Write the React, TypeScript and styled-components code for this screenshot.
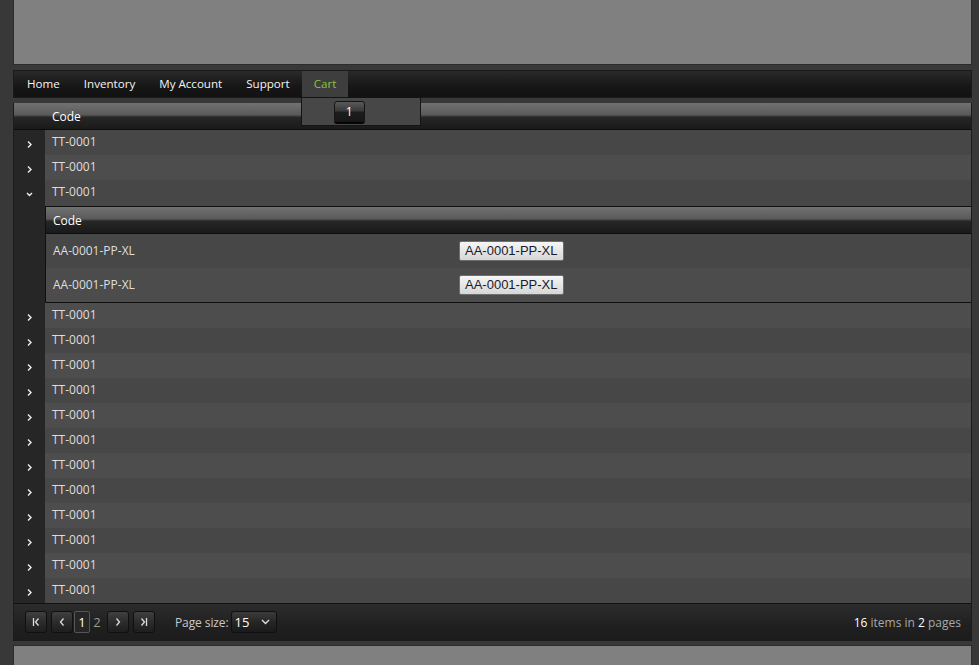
import React from "react";
import styled, { createGlobalStyle } from "styled-components";

const GlobalStyle = createGlobalStyle`
  html, body {
    margin: 0;
    padding: 0;
    background: #383838;
    font-family: "Open Sans", "DejaVu Sans", sans-serif;
  }
  * { box-sizing: border-box; }
`;

const Page = styled.div`
  width: 959px;
  margin-left: 13px;
  display: flex;
  flex-direction: column;
`;

const Banner = styled.div`
  height: 65px;
  background: #808080;
  border-left: 1px solid #2c2c2c;
  border-right: 1px solid #2c2c2c;
  border-bottom: 1px solid #2c2c2c;
`;

const Menu = styled.nav`
  position: relative;
  margin-top: 5px;
  height: 28px;
  display: flex;
  align-items: stretch;
  padding-left: 1px;
  border: 1px solid #1a1a1a;
  background: linear-gradient(#2a2a2a, #161616 60%, #121212);
`;

const MenuItem = styled.div<{ $active?: boolean }>`
  position: relative;
  display: flex;
  align-items: center;
  padding: 0 12px 1px;
  font-size: 11.6px;
  color: ${(p) => (p.$active ? "#8cc43c" : "#f4f4f4")};
  background: ${(p) => (p.$active ? "#3e3e3e" : "transparent")};
`;

const CartPopup = styled.div`
  position: absolute;
  left: -1px;
  top: 26px;
  width: 120px;
  height: 29px;
  background: #474747;
  border: 1px solid #141414;
  z-index: 2;
  display: flex;
  padding: 3px 0 0 32px;
`;

const CartButton = styled.div`
  width: 31px;
  height: 21px;
  border: 1px solid #141414;
  border-radius: 3px;
  background: linear-gradient(#5a5a5a, #3a3a3a 45%, #1c1c1c 55%, #181818);
  box-shadow: 0 2px 0 #050505;
  color: #fff;
  font-size: 12px;
  display: flex;
  align-items: center;
  justify-content: center;
`;

const Grid = styled.div`
  margin-top: 5px;
  border: 1px solid #1c1c1c;
  border-top: none;
  background: #474747;
`;

const HeaderRow = styled.div<{ $indent: number }>`
  height: 27px;
  display: flex;
  align-items: center;
  padding-left: ${(p) => p.$indent}px;
  color: #fff;
  font-size: 12px;
  background: linear-gradient(#727272, #5a5a5a 45%, #262626 55%, #1a1a1a);
  border-bottom: 1px solid #0c0c0c;
`;

const Row = styled.div<{ $alt: boolean }>`
  display: flex;
  height: 25px;
  background: ${(p) => (p.$alt ? "#4d4d4d" : "#474747")};
`;

const HierCell = styled.div`
  width: 31px;
  flex-shrink: 0;
  background: #262626;
  display: flex;
  align-items: center;
  justify-content: center;
  padding-top: 3px;
`;

const CodeCell = styled.div`
  flex: 1;
  display: flex;
  align-items: center;
  padding-left: 7px;
  padding-bottom: 2px;
  font-size: 12px;
  color: #dedede;
`;

const DetailRow = styled.div`
  display: flex;
  background: #474747;
`;

const DetailGrid = styled.div`
  flex: 1;
  margin-top: 1px;
  border: 1px solid #101010;
  border-right: none;
`;

const DetailItem = styled.div<{ $alt: boolean }>`
  height: 34px;
  display: grid;
  grid-template-columns: 406px 1fr;
  align-items: center;
  padding: 0 0 1px 7px;
  font-size: 12px;
  color: #dedede;
  background: ${(p) => (p.$alt ? "#4c4c4c" : "#474747")};
`;

const SkuButton = styled.button`
  justify-self: start;
  height: 20px;
  padding: 0 5px;
  font-family: "Liberation Sans", Arial, sans-serif;
  font-size: 13px;
  color: #1a1a2a;
  border: 1px solid #6e6e6e;
  border-radius: 2px;
  background: linear-gradient(#f6f6f6, #e6e6e6 50%, #d6d6d6);
`;

const Pager = styled.div`
  height: 37px;
  display: flex;
  align-items: center;
  padding: 0 10px 0 11px;
  border-top: 1px solid #111;
  background: linear-gradient(#2c2c2c, #202020 60%, #1c1c1c);
  color: #c8c8c8;
  font-size: 12px;
`;

const PagerButton = styled.div`
  width: 22px;
  height: 22px;
  margin-right: 4px;
  border: 1px solid #101010;
  border-radius: 3px;
  background: linear-gradient(#404040, #2c2c2c 50%, #1e1e1e);
  display: flex;
  align-items: center;
  justify-content: center;
`;

const PageNum = styled.div<{ $current?: boolean }>`
  min-width: 16px;
  height: 22px;
  margin: 0 2px 0 -3px;
  display: flex;
  align-items: center;
  justify-content: center;
  font-size: 13px;
  color: ${(p) => (p.$current ? "#fff" : "#9a9a9a")};
  border: 1px solid ${(p) => (p.$current ? "#555" : "transparent")};
  border-radius: 2px;
  background: ${(p) => (p.$current ? "#262626" : "transparent")};
`;

const SizeLabel = styled.span`
  margin-left: 16px;
  margin-right: 2px;
  letter-spacing: -0.1px;
`;

const SizeSelect = styled.div`
  width: 46px;
  height: 22px;
  border: 1px solid #101010;
  border-radius: 3px;
  background: linear-gradient(#3c3c3c, #262626 50%, #1a1a1a);
  display: flex;
  align-items: center;
  justify-content: space-between;
  padding: 0 6px 0 3px;
  color: #fff;
  font-size: 13px;
`;

const Info = styled.div`
  margin-left: auto;
  color: #a8a8a8;
  b {
    font-weight: normal;
    color: #fff;
  }
`;

const Footer = styled.div`
  margin-top: 4px;
  height: 30px;
  background: #808080;
  border: 1px solid #2c2c2c;
`;

const Chevron = ({ open }: { open?: boolean }) => (
  <svg width="9" height="9" viewBox="0 0 9 9">
    {open ? (
      <polyline points="2,3 4.5,5.5 7,3" fill="none" stroke="#f0f0f0" strokeWidth="1.4" />
    ) : (
      <polyline points="3,1.5 6,4.5 3,7.5" fill="none" stroke="#f0f0f0" strokeWidth="1.4" />
    )}
  </svg>
);

const PagerIcon = ({ kind }: { kind: "first" | "prev" | "next" | "last" }) => (
  <svg width="10" height="10" viewBox="0 0 10 10">
    {kind === "first" && (
      <>
        <line x1="2.5" y1="1" x2="2.5" y2="9" stroke="#ddd" strokeWidth="1.3" />
        <polyline points="7.5,1.5 4.5,5 7.5,8.5" fill="none" stroke="#ddd" strokeWidth="1.3" />
      </>
    )}
    {kind === "prev" && <polyline points="6.5,1.5 3.5,5 6.5,8.5" fill="none" stroke="#ddd" strokeWidth="1.3" />}
    {kind === "next" && <polyline points="3.5,1.5 6.5,5 3.5,8.5" fill="none" stroke="#ddd" strokeWidth="1.3" />}
    {kind === "last" && (
      <>
        <polyline points="2.5,1.5 5.5,5 2.5,8.5" fill="none" stroke="#ddd" strokeWidth="1.3" />
        <line x1="7.5" y1="1" x2="7.5" y2="9" stroke="#ddd" strokeWidth="1.3" />
      </>
    )}
  </svg>
);

const rows = Array.from({ length: 15 }, () => "TT-0001");
const details = ["AA-0001-PP-XL", "AA-0001-PP-XL"];

export default function App() {
  return (
    <>
      <GlobalStyle />
      <Page>
        <Banner />
        <Menu>
          <MenuItem>Home</MenuItem>
          <MenuItem>Inventory</MenuItem>
          <MenuItem>My Account</MenuItem>
          <MenuItem>Support</MenuItem>
          <MenuItem $active>
            Cart
            <CartPopup>
              <CartButton>1</CartButton>
            </CartPopup>
          </MenuItem>
        </Menu>
        <Grid>
          <HeaderRow $indent={38}>Code</HeaderRow>
          {rows.map((code, i) => (
            <React.Fragment key={i}>
              <Row $alt={i % 2 === 1}>
                <HierCell>
                  <Chevron open={i === 2} />
                </HierCell>
                <CodeCell>{code}</CodeCell>
              </Row>
              {i === 2 && (
                <DetailRow>
                  <HierCell />
                  <DetailGrid>
                    <HeaderRow $indent={7}>Code</HeaderRow>
                    {details.map((d, j) => (
                      <DetailItem key={j} $alt={j % 2 === 1}>
                        <span>{d}</span>
                        <SkuButton>{d}</SkuButton>
                      </DetailItem>
                    ))}
                  </DetailGrid>
                </DetailRow>
              )}
            </React.Fragment>
          ))}
          <Pager>
            <PagerButton><PagerIcon kind="first" /></PagerButton>
            <PagerButton><PagerIcon kind="prev" /></PagerButton>
            <PageNum $current>1</PageNum>
            <PageNum>2</PageNum>
            <PagerButton><PagerIcon kind="next" /></PagerButton>
            <PagerButton><PagerIcon kind="last" /></PagerButton>
            <SizeLabel>Page size:</SizeLabel>
            <SizeSelect>
              15
              <svg width="9" height="6" viewBox="0 0 9 6">
                <polyline points="1,1 4.5,4.5 8,1" fill="none" stroke="#ddd" strokeWidth="1.4" />
              </svg>
            </SizeSelect>
            <Info>
              <b>16</b> items in <b>2</b> pages
            </Info>
          </Pager>
        </Grid>
        <Footer />
      </Page>
    </>
  );
}
